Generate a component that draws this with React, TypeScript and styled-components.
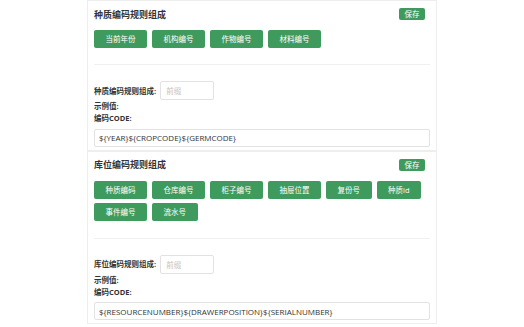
import React from "react";
import styled, { createGlobalStyle } from "styled-components";

const GlobalStyle = createGlobalStyle`
  body {
    margin: 0;
    background: #fff;
    font-family: "Open Sans", "Noto Sans CJK SC", sans-serif;
    color: #333;
  }
`;

const Page = styled.div`
  width: 350px;
  margin-left: 87px;
  display: flex;
  flex-direction: column;
`;

const Card = styled.div`
  background: #fff;
  border: 1px solid #eeeeee;
  padding: 7px 6px 3px 6px;
`;

const Header = styled.div`
  display: flex;
  align-items: center;
  justify-content: space-between;
  height: 12px;
  padding-right: 5px;
`;

const Title = styled.span`
  font-family: "Noto Sans CJK SC", sans-serif;
  font-size: 9px;
  font-weight: 700;
  color: #333;
`;

const SaveButton = styled.button`
  height: 12px;
  padding: 0 5.5px;
  border: none;
  border-radius: 2px;
  background: #3f9a5e;
  color: #fff;
  font-family: "Noto Sans CJK SC", sans-serif;
  font-size: 7.5px;
  line-height: 12px;
`;

const FieldGroup = styled.div`
  display: flex;
  flex-wrap: wrap;
  margin-top: 10px;
`;

const FieldButton = styled.button`
  height: 18px;
  margin: 0 5px 4px 0;
  padding: 0 11.5px;
  border: none;
  border-radius: 2px;
  background: #3f9a5e;
  color: #fff;
  font-family: "Open Sans", "Noto Sans CJK SC", sans-serif;
  font-size: 7.5px;
  line-height: 18px;
`;

const Divider = styled.hr<{ $gap: number }>`
  border: none;
  border-top: 1px solid #f0f0f0;
  margin: ${(p) => p.$gap}px 0 16px 0;
`;

const Row = styled.div`
  display: flex;
  align-items: center;
  gap: 4px;
`;

const Label = styled.div`
  font-family: "Open Sans", "Noto Sans CJK SC", sans-serif;
  font-size: 7.5px;
  font-weight: 700;
  line-height: 12px;
  color: #333;
`;

const PrefixInput = styled.input`
  box-sizing: border-box;
  width: 54px;
  height: 19px;
  padding: 0 5px;
  border: 1px solid #e2e2e2;
  border-radius: 2px;
  font-family: "Noto Sans CJK SC", sans-serif;
  font-size: 7.5px;
  outline: none;
  &::placeholder {
    color: #c4c4c4;
  }
`;

const CodeInput = styled.input`
  box-sizing: border-box;
  width: 100%;
  height: 18px;
  margin-top: 2px;
  padding: 0 4px;
  border: 1px solid #e2e2e2;
  border-radius: 2px;
  font-family: "Open Sans", sans-serif;
  font-size: 8px;
  color: #333;
  outline: none;
`;

type Rule = {
  title: string;
  label: string;
  fields: string[];
  code: string;
  gap: number;
};

const rules: Rule[] = [
  {
    title: "种质编码规则组成",
    label: "种质编码规则组成:",
    fields: ["当前年份", "机构编号", "作物编号", "材料编号"],
    code: "${YEAR}${CROPCODE}${GERMCODE}",
    gap: 12,
  },
  {
    title: "库位编码规则组成",
    label: "库位编码规则组成:",
    fields: ["种质编码", "仓库编号", "柜子编号", "抽屉位置", "复份号", "种质id", "事件编号", "流水号"],
    code: "${RESOURCENUMBER}${DRAWERPOSITION}${SERIALNUMBER}",
    gap: 13,
  },
];

function RuleCard({ rule }: { rule: Rule }) {
  return (
    <Card>
      <Header>
        <Title>{rule.title}</Title>
        <SaveButton>保存</SaveButton>
      </Header>
      <FieldGroup>
        {rule.fields.map((f) => (
          <FieldButton key={f}>{f}</FieldButton>
        ))}
      </FieldGroup>
      <Divider $gap={rule.gap} />
      <Row>
        <Label>{rule.label}</Label>
        <PrefixInput placeholder="前缀" />
      </Row>
      <Label>示例值:</Label>
      <Label>编码CODE:</Label>
      <CodeInput readOnly value={rule.code} />
    </Card>
  );
}

export default function App() {
  return (
    <>
      <GlobalStyle />
      <Page>
        {rules.map((r) => (
          <RuleCard key={r.title} rule={r} />
        ))}
      </Page>
    </>
  );
}
